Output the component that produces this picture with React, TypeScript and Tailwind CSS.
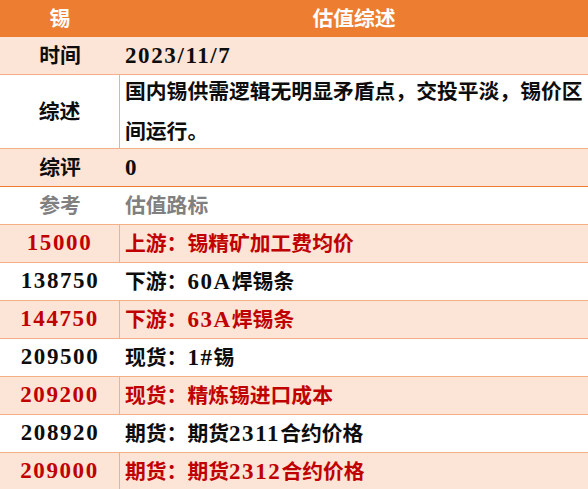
import React from "react";

type Row = {
    label: string;
    value: string;
    bg: "peach" | "white";
    tone: "black" | "red" | "grey";
    divider?: boolean;
    height?: string;
    darkLine?: boolean;
};

const rows: Row[] = [
    { label: "时间", value: "2023/11/7", bg: "peach", tone: "black" },
    {
        label: "综述",
        value: "国内锡供需逻辑无明显矛盾点，交投平淡，锡价区间运行。",
        bg: "white",
        tone: "black",
        divider: true,
        height: "h-[74px]",
    },
    { label: "综评", value: "0", bg: "peach", tone: "black", darkLine: true },
    { label: "参考", value: "估值路标", bg: "white", tone: "grey" },
    { label: "15000", value: "上游：锡精矿加工费均价", bg: "peach", tone: "red", divider: true },
    { label: "138750", value: "下游：60A焊锡条", bg: "white", tone: "black" },
    { label: "144750", value: "下游：63A焊锡条", bg: "peach", tone: "red", divider: true },
    { label: "209500", value: "现货：1#锡", bg: "white", tone: "black" },
    { label: "209200", value: "现货：精炼锡进口成本", bg: "peach", tone: "red", divider: true },
    { label: "208920", value: "期货：期货2311合约价格", bg: "white", tone: "black" },
    { label: "209000", value: "期货：期货2312合约价格", bg: "peach", tone: "red", divider: true },
];

// latin runs get a larger size and extra spacing, like the wide serif digits in the sheet
function Txt({ text }: { text: string }) {
    const parts = text.split(/([\x20-\x7E]+)/).filter(Boolean);
    return (
        <>
            {parts.map((p, i) =>
                /^[\x20-\x7E]+$/.test(p) ? (
                    <span key={i} className="text-[23px] tracking-[1.6px]">
                        {p}
                    </span>
                ) : (
                    <span key={i}>{p}</span>
                )
            )}
        </>
    );
}

export default function App() {
    return (
        <div
            className="w-[588px] h-[489px] overflow-hidden bg-white text-[20.8px] font-bold"
            style={{ fontFamily: '"Liberation Serif", "Noto Sans CJK SC", serif' }}
        >
            {/* Header */}
            <div className="flex h-[37px] bg-[#ED7D31] text-white">
                <div className="w-[120px] flex items-center justify-center">锡</div>
                <div className="flex-1 flex items-center justify-center">估值综述</div>
            </div>

            {rows.map((r) => {
                const bg = r.bg === "peach" ? "bg-[#FCE4D6]" : "bg-white";
                const color =
                    r.tone === "red"
                        ? "text-[#C00000]"
                        : r.tone === "grey"
                            ? "text-[#808080]"
                            : "text-[#0d0d0d]";
                const line = r.darkLine ? "border-[#ED7D31]" : "border-[#F4B084]";
                return (
                    <div
                        key={r.label}
                        className={`flex border-b ${line} ${bg} ${color} ${r.height ?? "h-[38px]"}`}
                    >
                        <div
                            className={`w-[120px] shrink-0 flex items-center justify-center ${r.divider ? "border-r border-[#F4B084]" : ""
                                }`}
                        >
                            <Txt text={r.label} />
                        </div>
                        <div className="flex-1 flex items-center pl-[5px]">
                            <div className="leading-[40px]">
                                <Txt text={r.value} />
                            </div>
                        </div>
                    </div>
                );
            })}
        </div>
    );
}
